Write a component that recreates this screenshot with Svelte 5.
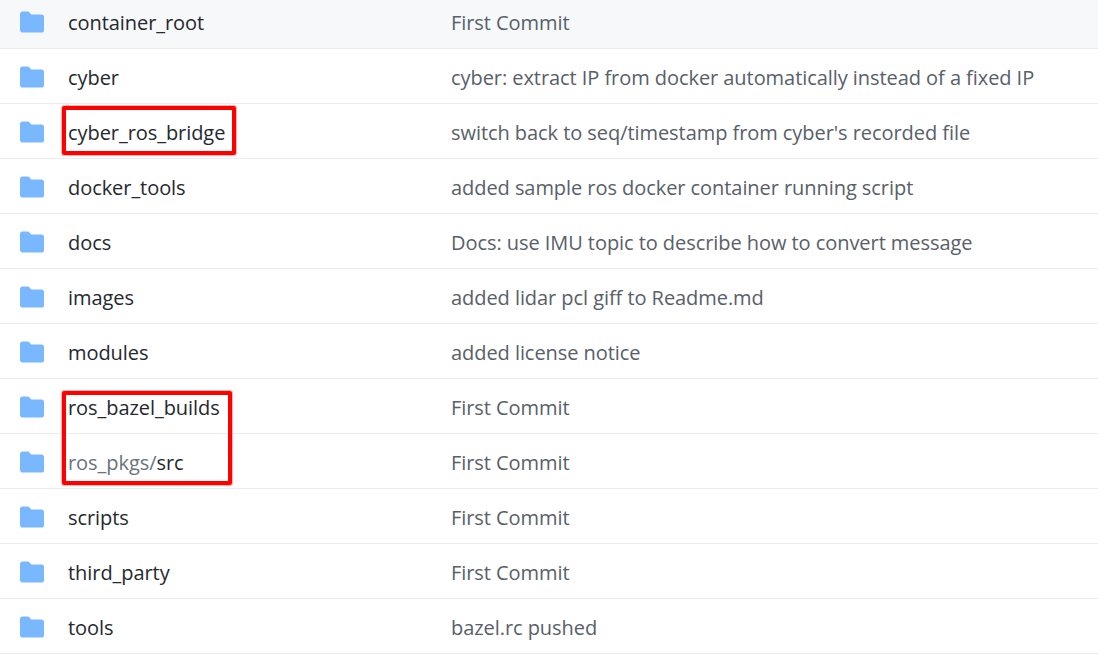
<script>
	const rows = [
		{ name: 'container_root', msg: 'First Commit' },
		{ name: 'cyber', msg: 'cyber: extract IP from docker automatically instead of a fixed IP' },
		{ name: 'cyber_ros_bridge', msg: "switch back to seq/timestamp from cyber's recorded file" },
		{ name: 'docker_tools', msg: 'added sample ros docker container running script' },
		{ name: 'docs', msg: 'Docs: use IMU topic to describe how to convert message' },
		{ name: 'images', msg: 'added lidar pcl giff to Readme.md' },
		{ name: 'modules', msg: 'added license notice' },
		{ name: 'ros_bazel_builds', msg: 'First Commit' },
		{ prefix: 'ros_pkgs/', name: 'src', msg: 'First Commit' },
		{ name: 'scripts', msg: 'First Commit' },
		{ name: 'third_party', msg: 'First Commit' },
		{ name: 'tools', msg: 'bazel.rc pushed' }
	];
</script>

<div class="list">
	{#each rows as row, i}
		<div class="row" class:hover={i === 0}>
			<svg class="icon" viewBox="0 0 16 16" aria-hidden="true">
				<path d="M1.75 1A1.75 1.75 0 0 0 0 2.75v10.5C0 14.216.784 15 1.75 15h12.5A1.75 1.75 0 0 0 16 13.25v-8.5A1.75 1.75 0 0 0 14.25 3H7.5a.25.25 0 0 1-.2-.1l-.9-1.2C6.07 1.26 5.55 1 5 1H1.75z" />
			</svg>
			<div class="name">
				{#if row.prefix}<span class="prefix">{row.prefix}</span>{/if}{row.name}
			</div>
			<div class="msg">{row.msg}</div>
		</div>
	{/each}

	<div class="mark mark-one"></div>
	<div class="mark mark-two"></div>
</div>

<style>
	:global(body) {
		background: #fff;
	}

	.list {
		position: relative;
		height: 655px;
		overflow: hidden;
		margin-top: -1px;
		font-family: 'Open Sans', 'Noto Sans', sans-serif;
		font-size: 20px;
		letter-spacing: -0.06px;
		color: #24292e;
	}

	.row {
		display: flex;
		align-items: center;
		box-sizing: border-box;
		height: 55px;
		padding: 2px 0 0 20px;
		border-bottom: 1px solid #eaecef;
	}

	.row:first-child {
		height: 50px;
		padding-top: 0;
		padding-bottom: 3px;
	}

	.row.hover {
		background: #f6f8fa;
	}

	.icon {
		width: 24px;
		height: 24px;
		fill: #79b8ff;
		flex-shrink: 0;
	}

	.name {
		width: 383px;
		margin-left: 24px;
		flex-shrink: 0;
	}

	.prefix {
		color: #6a737d;
	}

	.msg {
		color: #586069;
	}

	.mark {
		position: absolute;
		box-sizing: border-box;
		border: 4px solid #ff0000;
		border-radius: 2px;
		box-shadow: 0 0 0 1px #ffb4b4;
	}

	.mark-one {
		left: 62px;
		top: 107px;
		width: 174px;
		height: 49px;
	}

	.mark-two {
		left: 62px;
		top: 392px;
		width: 170px;
		height: 94px;
	}
</style>
